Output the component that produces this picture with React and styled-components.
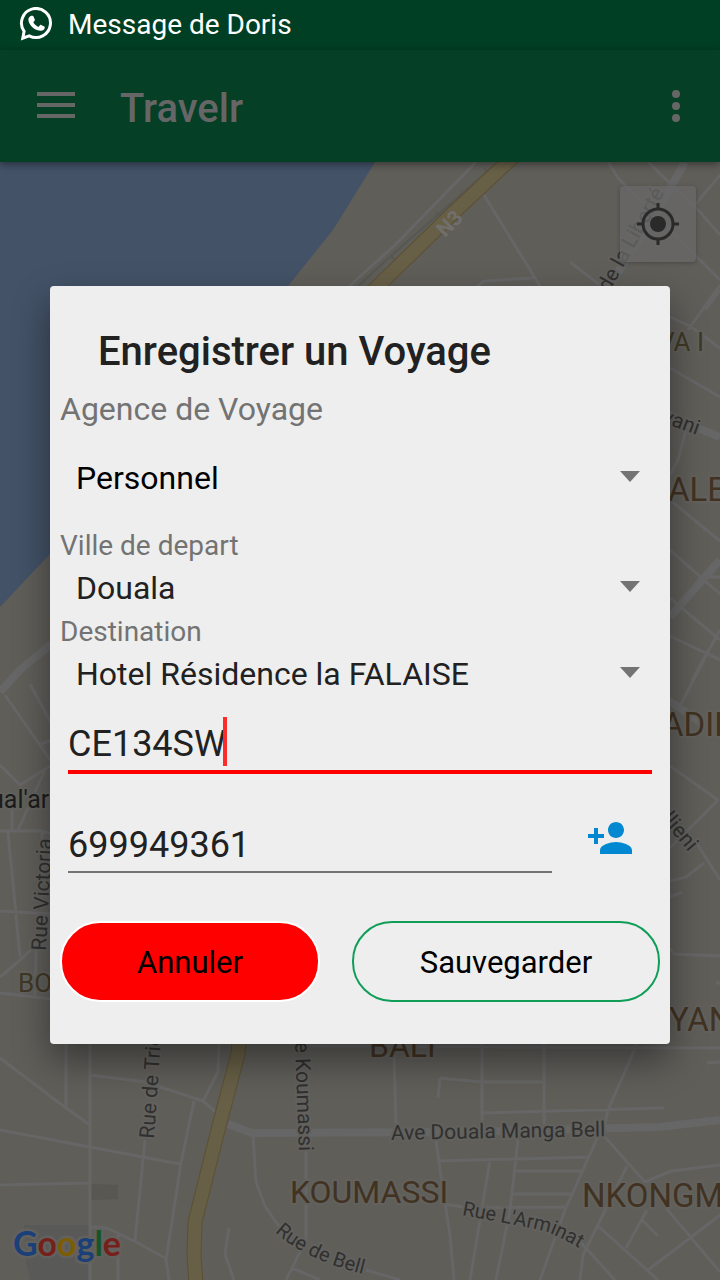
import React from "react";
import styled, { createGlobalStyle } from "styled-components";

const GlobalStyle = createGlobalStyle`
  *, *::before, *::after { box-sizing: border-box; }
  body {
    margin: 0;
    background: #5f5e59;
    font-family: Roboto, "Liberation Sans", sans-serif;
  }
  button, input, select { font-family: inherit; }
`;

const Screen = styled.div`
  position: relative;
  display: flex;
  flex-direction: column;
  min-height: 100vh;
  overflow: hidden;
`;

const StatusBar = styled.div`
  display: flex;
  align-items: center;
  gap: 14px;
  height: 50px;
  padding: 0 18px;
  background: #003f24;
  color: #fff;
  font-size: 28px;
  line-height: 32px;
`;

const AppBar = styled.header`
  position: relative;
  z-index: 1;
  display: flex;
  align-items: center;
  height: 112px;
  padding: 0 32px;
  background: #053f26;
  color: #666;
  box-shadow: 0 2px 8px rgba(0, 0, 0, 0.45);
`;

const BarButton = styled.button`
  display: flex;
  align-items: center;
  justify-content: center;
  width: ${(p) => (p.$narrow ? 24 : 48)}px;
  height: 48px;
  padding: 0;
  border: 0;
  background: none;
  color: inherit;
`;

const AppTitle = styled.h1`
  flex: 1;
  margin: 0 0 0 40px;
  padding-top: 6px;
  font-size: 40px;
  font-weight: 500;
  line-height: 48px;
`;

const MapArea = styled.main`
  position: relative;
  flex: 1;
  background: #5f5e59;
`;

const MapDrawing = styled.svg`
  position: absolute;
  inset: 0;
  width: 100%;
  height: 100%;
`;

const LocateButton = styled.button`
  position: absolute;
  top: 24px;
  right: 24px;
  display: flex;
  align-items: center;
  justify-content: center;
  width: 76px;
  height: 76px;
  padding: 0;
  border: 0;
  border-radius: 4px;
  background: rgba(104, 104, 104, 0.75);
  box-shadow: 0 1px 4px rgba(0, 0, 0, 0.25);
`;

const Overlay = styled.div`
  position: absolute;
  inset: 0;
  z-index: 2;
  display: flex;
  align-items: center;
  padding: 50px 50px 0;
`;

const Dialog = styled.form`
  flex: 1;
  padding: 40px 0 42px;
  border-radius: 4px;
  background: #eee;
  color: #212121;
  box-shadow: 0 16px 36px rgba(0, 0, 0, 0.42);
`;

const DialogTitle = styled.h2`
  margin: 0 48px 10px;
  font-size: 40px;
  font-weight: 500;
  line-height: 52px;
`;

const Label = styled.label`
  display: block;
  padding: ${(p) => (p.$large ? 0 : 2)}px 10px 0;
  color: #737373;
  font-size: ${(p) => (p.$large ? 32 : 28)}px;
  line-height: ${(p) => (p.$large ? 42 : 36)}px;
`;

const Picker = styled.div`
  display: grid;
  align-items: center;
  height: ${(p) => (p.$tall ? 96 : 48)}px;

  select, svg { grid-area: 1 / 1; }
  svg { justify-self: end; margin-right: 30px; pointer-events: none; }
`;

const Select = styled.select`
  appearance: none;
  width: 100%;
  height: 48px;
  padding: 0 60px 0 26px;
  border: 0;
  outline: 0;
  background: none;
  color: ${(p) => (p.$strong ? "#000" : "#212121")};
  font-size: 32px;
`;

const PlateField = styled.div`
  position: relative;
  margin: 18px 18px 0;
`;

const TextInput = styled.input`
  display: block;
  flex: 1;
  width: 100%;
  min-width: 0;
  height: ${(p) => (p.$active ? 58 : 56)}px;
  padding: 2px 0 0;
  border: 0;
  border-bottom: ${(p) => (p.$active ? "4px solid #f00" : "2px solid #737373")};
  border-radius: 0;
  outline: 0;
  background: none;
  color: #212121;
  font-size: 36px;
`;

const Caret = styled.span`
  position: absolute;
  top: 1px;
  left: 155px;
  width: 4px;
  height: 49px;
  background: #ff2a2a;
`;

const PhoneRow = styled.div`
  display: flex;
  align-items: flex-start;
  gap: 34px;
  margin: 43px 36px 0 18px;
`;

const ContactButton = styled.button`
  display: flex;
  align-items: center;
  justify-content: center;
  width: 48px;
  height: 42px;
  padding: 0;
  border: 0;
  background: none;
  color: #0288d1;
`;

const Actions = styled.div`
  display: grid;
  grid-template-columns: 260fr 308fr;
  gap: 32px;
  margin: 48px 10px 0;
`;

const ActionButton = styled.button`
  height: 81px;
  padding: 2px 0 0;
  border: 2px solid ${(p) => (p.$danger ? "#fff" : "#0f9d58")};
  border-radius: 40px;
  background: ${(p) => (p.$danger ? "#f00" : "transparent")};
  color: #000;
  font-size: 31px;
`;

const MAJOR_ROADS = [
  "M228 1124L252 1133L460 1132L660 1127L720 1120",
  "M685 162L655 215L600 300L560 370",
  "M670 617L720 560",
  "M668 414L690 425L720 437",
  "M0 692L20 670L50 645L90 625",
  "M668 700L700 722",
];

const MINOR_ROADS = [
  "M360 440L420 385L500 290L360 440M476 162L395 245L345 290",
  "M484 195L540 286M473 290L484 281L534 278",
  "M608 162L618 178L720 280M570 262L600 285",
  "M648 162L700 212L720 235M720 175L695 205M720 290L705 310",
  "M720 285L688 330M670 317L690 326L720 348M670 368L720 397M686 430L678 460L670 475",
  "M670 500L720 541M670 550L720 594M670 598L720 640M700 577L720 577M670 636L720 660M720 630L692 680",
  "M704 660L680 706M670 766L718 800L670 848M696 842L720 880M670 881L686 877L704 863M670 897L682 892M670 948L674 954L720 956M716 983L720 983",
  "M66 1044L66 1108M90 1044L90 1280M0 1058L66 1108L90 1125M0 1130L90 1147L180 1164M0 1185L90 1183",
  "M90 1075L145 1082L203 1101L217 1113M219 1044L218 1072L203 1101M194 1101L181 1163L166 1260L169 1280",
  "M145 1140L135 1240M90 1227L107 1228L138 1243L165 1258M118 1235L118 1280",
  "M253 1135L256 1182L265 1206L280 1228M306 1150L306 1240L286 1280M229 1228L225 1254L234 1280M292 1268L320 1280",
  "M30 684L52 725M5 695L35 738L50 760M38 745L52 740M0 765L20 785L52 765M12 800L12 830M0 831L42 831L52 834M8 832L20 957M18 830L45 770M0 977L20 960L52 930M0 911L52 914M0 993L52 999M36 950L35 995M42 831L42 850",
  "M306 1046L720 1048M394 1056L396 1125M440 1078L482 1082L545 1082M440 1078L438 1098M482 1044L482 1124M544 1044L544 1124M483 1113L664 1108",
  "M637 1044L608 1110L604 1128M600 1132L565 1210L540 1280M436 1140L440 1170L450 1235L454 1280M438 1161L590 1157",
  "M518 1140L510 1210L496 1280M490 1160L470 1280M516 1171L584 1171M512 1194L574 1194M444 1204L470 1208L565 1207",
  "M604 1136L645 1182M627 1166L583 1255L580 1280M645 1182L671 1171L720 1165M647 1210L626 1248M598 1226L658 1280M574 1235L615 1280M642 1220L658 1236M666 1208L720 1272M720 1215L648 1270M707 1063L720 1062",
  "M366 1270L400 1280",
];

const HIGHWAY_NORTH = "M515 155L450 216L372 292";
const HIGHWAY_SOUTH = "M240 1030L238 1054L218 1130L195 1222L194 1256L196 1285";

function CityMap() {
  return (
    <MapDrawing viewBox="0 162 720 1118" preserveAspectRatio="xMidYMid slice" aria-label="Plan de Douala">
      <path d="M0 162H375L333 230L288 286L50 554L0 607Z" fill="#435267" />
      <path d="M24 1225H90V1280H30L26 1262Z" fill="#595958" />
      <path d="M91 1184L118 1185V1199L91 1200Z" fill="#585752" />
      <g fill="none" stroke="#666667" strokeLinejoin="round">
        <path d={MINOR_ROADS.join("")} strokeWidth="3" />
        <path d={MAJOR_ROADS.join("")} strokeWidth="8" />
      </g>
      <path d="M498 162L384 262L352 292M484 168L492 176M436 212L444 220M391 256L399 264" fill="none" stroke="#575753" strokeWidth="2" />
      <g fill="none" strokeLinejoin="round">
        <path d={HIGHWAY_NORTH + HIGHWAY_SOUTH} stroke="#5b5035" strokeWidth="15" />
        <path d={HIGHWAY_NORTH + HIGHWAY_SOUTH} stroke="#675f46" strokeWidth="13" />
      </g>
      <g fontFamily="Roboto, sans-serif" stroke="#62615d" strokeWidth="4" paintOrder="stroke" strokeLinejoin="round">
        <text transform="translate(445 238) rotate(-45)" fontSize="21" fontWeight="700" fill="#706f6b" stroke="none">N3</text>
        <g fill="#303030" fontSize="21">
          <text transform="translate(609 293) rotate(-61)">de la Liberté</text>
          <text transform="translate(661 422) rotate(20)">vani</text>
          <text transform="translate(661 819) rotate(50)">llieni</text>
          <text transform="translate(46 951) rotate(-87)">Rue Victoria</text>
          <text transform="translate(154 1139) rotate(-86)">Rue de Trie</text>
          <text transform="translate(295 1042) rotate(88)">e Koumassi</text>
          <text transform="translate(391 1140) rotate(-1)">Ave Douala Manga Bell</text>
          <path id="arminat" d="M462 1215Q500 1222 540 1230Q558 1234 595 1258" fill="none" stroke="none" />
          <text fontSize="20"><textPath href="#arminat">Rue L'Arminat</textPath></text>
          <path id="bell" d="M275 1232Q310 1265 390 1280" fill="none" stroke="none" />
          <text fontSize="20"><textPath href="#bell">Rue de Bell</textPath></text>
        </g>
        <text x="-10" y="808" fontSize="25" fill="#1c1c1c">ual'ar</text>
        <g fill="#413222">
          <text x="658" y="351" fontSize="26" fill="#3f3826">VA I</text>
          <text x="668" y="501" fontSize="33">ALE</text>
          <text x="662" y="736" fontSize="33">ADIE</text>
          <text x="669" y="1031" fontSize="33">YAN</text>
          <text x="18" y="992" fontSize="26" fill="#3f3826">BO</text>
          <text x="369" y="1057" fontSize="32">BALI</text>
          <text x="290" y="1203" fontSize="32">KOUMASSI</text>
          <text x="582" y="1207" fontSize="33">NKONGM</text>
        </g>
      </g>
      <text x="13" y="1256" fontFamily="Lato, sans-serif" fontSize="34" fontWeight="700" stroke="#62615d" strokeWidth="5" paintOrder="stroke" strokeLinejoin="round">
        <tspan fill="#1b3f78">G</tspan>
        <tspan fill="#76201b">o</tspan>
        <tspan fill="#7c5d03">o</tspan>
        <tspan fill="#1b3f78">g</tspan>
        <tspan fill="#155529">l</tspan>
        <tspan fill="#76201b">e</tspan>
      </text>
    </MapDrawing>
  );
}

function ChatIcon() {
  return (
    <svg width="36" height="36" viewBox="0 0 36 36" aria-hidden="true">
      <path d="M6.1 24.3A14.5 14.5 0 1 1 11.2 28.8L4.8 31.2Z" fill="none" stroke="#fff" strokeWidth="3" />
      <path
        d="M13.2 8.7h1.3c.5 0 .8.2 1 .7l1.3 3.2c.2.4.1.8-.2 1.1l-1.3 1.6c1.2 2.1 2.9 3.6 5.2 4.6l1.6-1.8c.3-.4.7-.4 1.1-.2l3.1 1.5c.5.2.6.5.5 1-.3 2.4-2.3 3.6-4.6 3.3C15.5 23 10.6 17 10.4 12.9c-.1-1.8.9-3.6 2.8-4.2z"
        fill="#fff"
      />
    </svg>
  );
}

function Choice({ id, value, tall, strong }) {
  return (
    <Picker $tall={tall}>
      <Select id={id} defaultValue={value} $strong={strong}>
        <option>{value}</option>
      </Select>
      <svg width="20" height="16" viewBox="0 0 20 16" aria-hidden="true">
        <path d="M0 1H20L10 12Z" fill="#737373" />
      </svg>
    </Picker>
  );
}

export default function App() {
  return (
    <Screen>
      <GlobalStyle />
      <StatusBar>
        <ChatIcon />
        <span>Message de Doris</span>
      </StatusBar>
      <AppBar>
        <BarButton aria-label="Menu">
          <svg width="38" height="28" viewBox="0 0 38 28" fill="currentColor">
            <path d="M0 0H38V4H0ZM0 11H38V15H0ZM0 22H38V26H0Z" />
          </svg>
        </BarButton>
        <AppTitle>Travelr</AppTitle>
        <BarButton $narrow aria-label="Plus d'options">
          <svg width="8" height="32" viewBox="0 0 8 32" fill="currentColor">
            <circle cx="4" cy="4" r="4" />
            <circle cx="4" cy="16" r="4" />
            <circle cx="4" cy="28" r="4" />
          </svg>
        </BarButton>
      </AppBar>
      <MapArea>
        <CityMap />
        <LocateButton aria-label="Ma position">
          <svg width="42" height="42" viewBox="0 0 42 42" fill="none" stroke="#2a2a2a">
            <circle cx="21" cy="21" r="15" strokeWidth="3" />
            <circle cx="21" cy="21" r="8" fill="#2a2a2a" stroke="none" />
            <path d="M21 0V6M21 36V42M0 21H6M36 21H42" strokeWidth="3" />
          </svg>
        </LocateButton>
      </MapArea>
      <Overlay>
        <Dialog role="dialog" aria-labelledby="dialog-title" onSubmit={(e) => e.preventDefault()}>
          <DialogTitle id="dialog-title">Enregistrer un Voyage</DialogTitle>
          <Label htmlFor="agency" $large>Agence de Voyage</Label>
          <Choice id="agency" value="Personnel" tall strong />
          <Label htmlFor="origin">Ville de depart</Label>
          <Choice id="origin" value="Douala" />
          <Label htmlFor="destination">Destination</Label>
          <Choice id="destination" value="Hotel Résidence la FALAISE" />
          <PlateField>
            <TextInput $active aria-label="Immatriculation" defaultValue="CE134SW" />
            <Caret />
          </PlateField>
          <PhoneRow>
            <TextInput type="tel" aria-label="Téléphone" defaultValue="699949361" />
            <ContactButton type="button" aria-label="Ajouter un contact">
              <svg width="48" height="48" viewBox="0 0 24 24" fill="currentColor">
                <path d="M15 12c2.21 0 4-1.79 4-4s-1.79-4-4-4-4 1.79-4 4 1.79 4 4 4zm-9-2V7H4v3H1v2h3v3h2v-3h3v-2H6zm9 4c-2.67 0-8 1.34-8 4v2h16v-2c0-2.66-5.33-4-8-4z" />
              </svg>
            </ContactButton>
          </PhoneRow>
          <Actions>
            <ActionButton type="button" $danger>Annuler</ActionButton>
            <ActionButton type="submit">Sauvegarder</ActionButton>
          </Actions>
        </Dialog>
      </Overlay>
    </Screen>
  );
}
